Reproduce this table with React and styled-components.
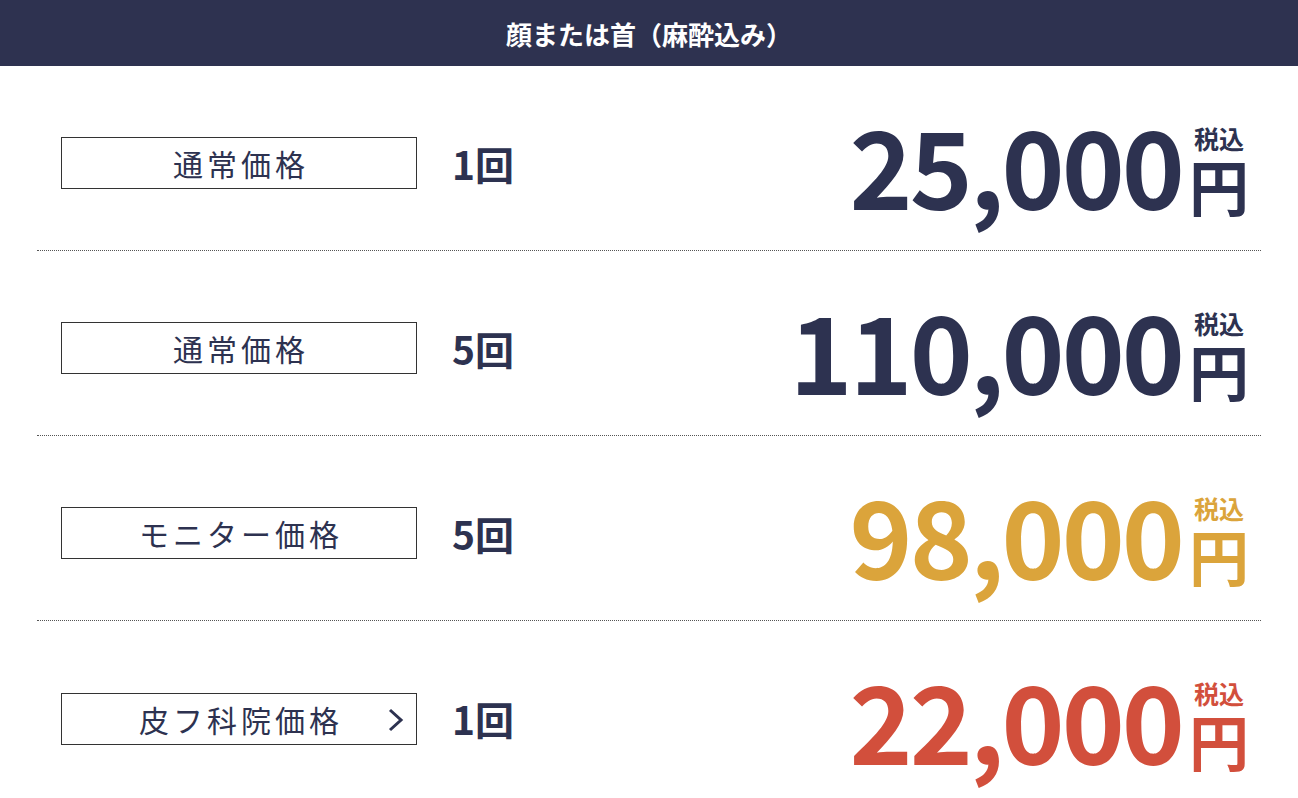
import React from 'react';
import styled, { createGlobalStyle } from 'styled-components';

const GlobalStyle = createGlobalStyle`
    body {
        margin: 0;
        background: #fff;
        font-family: "Noto Sans CJK JP", "Noto Sans", sans-serif;
        color: #2d3250;
    }
`;

const Header = styled.div`
    height: 66px;
    background: #2e3250;
    color: #fff;
    display: flex;
    align-items: center;
    justify-content: center;
    font-size: 26px;
    font-weight: 700;
`;

const List = styled.div`
    margin: 0 37px;
`;

const Row = styled.div`
    height: 185px;
    display: flex;
    align-items: center;
    padding: 10px 12px 0 24px;
    box-sizing: border-box;
    border-bottom: ${p => (p.last ? 'none' : '1px dotted #555')};
`;

const Label = styled.div`
    position: relative;
    width: 356px;
    height: 52px;
    box-sizing: border-box;
    border: 1px solid #333;
    display: flex;
    align-items: center;
    justify-content: center;
    font-size: 30px;
    letter-spacing: 4px;
    padding-left: 4px;
    color: #2d3250;
`;

const Arrow = styled.svg`
    position: absolute;
    right: 10px;
    top: 13px;
`;

const Count = styled.div`
    margin-left: 35px;
    font-size: 39px;
    font-weight: 700;
    line-height: 1;
    color: #2d3250;
`;

const Price = styled.div`
    margin-left: auto;
    display: flex;
    align-items: flex-end;
    color: ${p => p.color};
`;

const Amount = styled.div`
    font-size: 107px;
    font-weight: 700;
    line-height: 1;
    letter-spacing: -3px;
`;

const Unit = styled.div`
    display: flex;
    flex-direction: column;
    align-items: center;
    margin-left: 7px;
    margin-bottom: 2px;
`;

const Tax = styled.span`
    font-size: 25px;
    font-weight: 700;
    line-height: 1;
    margin-bottom: 4px;
`;

const Yen = styled.span`
    font-size: 60px;
    font-weight: 700;
    line-height: 1;
`;

const rows = [
    { label: '通常価格', count: '1回', amount: '25,000', color: '#2d3250' },
    { label: '通常価格', count: '5回', amount: '110,000', color: '#2d3250' },
    { label: 'モニター価格', count: '5回', amount: '98,000', color: '#dba43b' },
    { label: '皮フ科院価格', count: '1回', amount: '22,000', color: '#d24f3c', arrow: true },
];

const App = () => {
    return (
        <>
            <GlobalStyle />
            <Header>顔または首（麻酔込み）</Header>
            <List>
                {rows.map((r, i) => (
                    <Row key={i} last={i === rows.length - 1}>
                        <Label>
                            {r.label}
                            {r.arrow && (
                                <Arrow width="19" height="26" viewBox="0 0 19 26">
                                    <polyline points="3,3 14,13 3,23" fill="none" stroke="#2d3250" strokeWidth="3" />
                                </Arrow>
                            )}
                        </Label>
                        <Count>{r.count}</Count>
                        <Price color={r.color}>
                            <Amount>{r.amount}</Amount>
                            <Unit>
                                <Tax>税込</Tax>
                                <Yen>円</Yen>
                            </Unit>
                        </Price>
                    </Row>
                ))}
            </List>
        </>
    );
};

export default App;
